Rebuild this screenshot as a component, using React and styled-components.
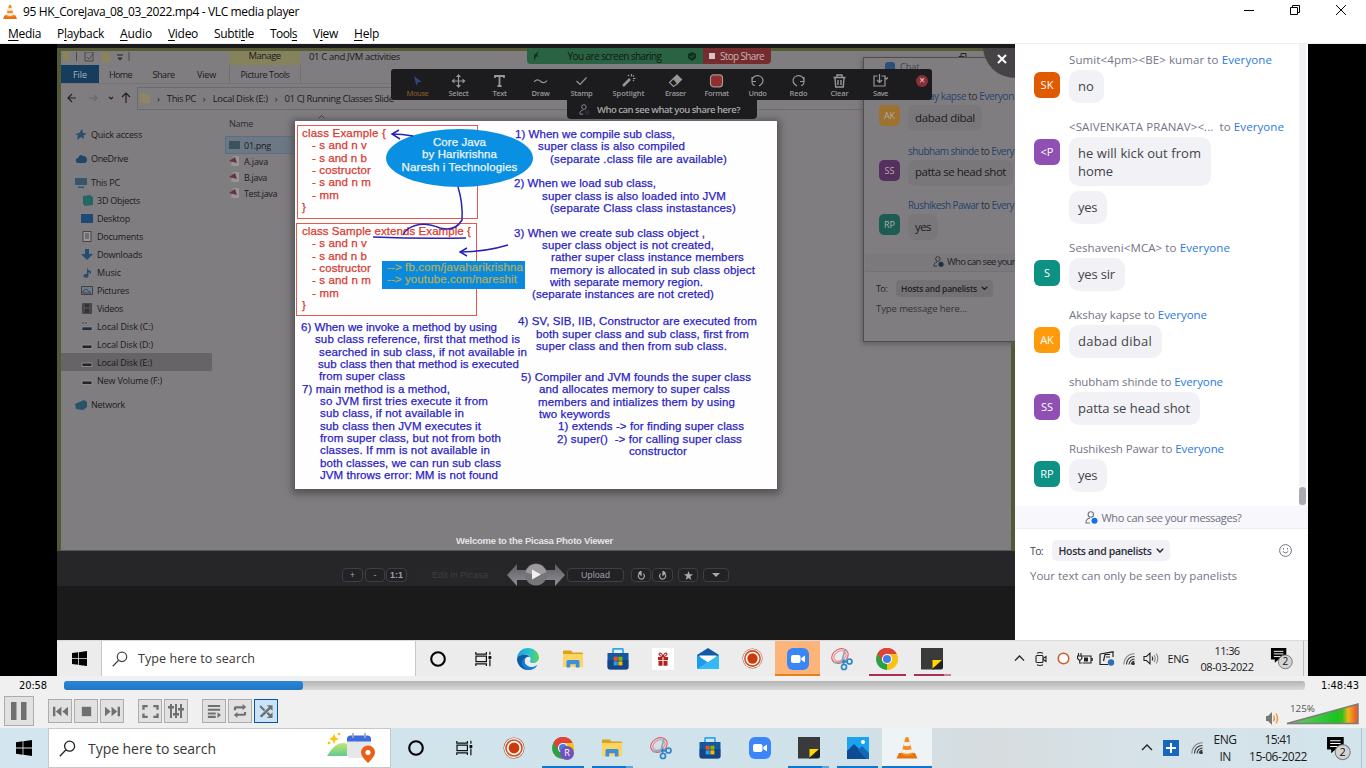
import React, { useLayoutEffect, useRef } from "react";
import styled, { createGlobalStyle } from "styled-components";

const Global = createGlobalStyle`
  * { box-sizing: border-box; }
  html, body { margin: 0; padding: 0; }
  body { width: 1366px; height: 768px; overflow: hidden; background: #f0f0f0; font-family: "Open Sans", "Noto Sans", sans-serif; }
  svg { display: block; flex: none; }
`;

/* ---------- text that is tracked to an exact width ---------- */
const FitSpan = styled.span`
  display: inline-block;
  white-space: pre;
  flex: none;
`;
function Fit({ w, children }) {
  const ref = useRef(null);
  useLayoutEffect(() => {
    const el = ref.current;
    el.style.letterSpacing = "0px";
    const natural = el.getBoundingClientRect().width;
    el.style.letterSpacing = `${(w - natural) / el.textContent.length}px`;
  }, [w, children]);
  return <FitSpan ref={ref}>{children}</FitSpan>;
}

/* ---------- icons ---------- */
const Windows = ({ s = 16 }) => (
  <svg width={s} height={s} viewBox="0 0 16 16" fill="#000">
    <path d="M0 2.2 6.6 1.3V7.6H0zM7.4 1.2 16 0V7.6H7.4zM0 8.4H6.6V14.7L0 13.8zM7.4 8.4H16V16L7.4 14.8z" />
  </svg>
);
const Search = ({ s = 17, c = "#222" }) => (
  <svg width={s} height={s} viewBox="0 0 17 17" fill="none" stroke={c} strokeWidth="1.3">
    <circle cx="10.6" cy="6.2" r="5" /><path d="M7 9.8 .8 16.2" />
  </svg>
);
const Ring = () => (
  <svg width="18" height="18" viewBox="0 0 18 18" fill="none" stroke="#000" strokeWidth="2.1"><circle cx="9" cy="9" r="6.8" /></svg>
);
const TaskView = () => (
  <svg width="17" height="16" viewBox="0 0 17 16" fill="none" stroke="#111" strokeWidth="1.2">
    <path d="M.8 1v2.2h10.6V1M.8 15v-2.2h10.6V15M1 5.2h10.4v5.4H1zM14.9 .8v3M14.9 8.5v6.7" />
    <path d="M13.5 5h2.8v3h-2.8z" fill="#111" stroke="none" />
  </svg>
);
const Edge = () => (
  <svg width="24" height="24" viewBox="0 0 24 24">
    <defs><linearGradient id="eg" x1="0" x2="1"><stop offset="0" stopColor="#1b9de2" /><stop offset=".6" stopColor="#2bc3c8" /><stop offset="1" stopColor="#62d34a" /></linearGradient></defs>
    <path d="M1 12C1 5.500 6 1 12 1s11 4.500 11 9.500c0 3.500-3 5.500-6 5.500-2.500 0-3.500-1-3.200-1.700.8-1 .9-2 .7-3C14 9 12 7.500 9 7.500 5 7.500 1.800 9.500 1 12z" fill="url(#eg)" />
    <path d="M1 12c.8-3 4-4.500 7.500-4.500 2.500 0 4.500 1 5.500 2.600-3-1-5.500 1-5.500 4 0 4 4 6.500 8 6 2-.3 3.600-1 4.800-2.200C19.500 21.200 16 23 12 23 6 23 1 18 1 12z" fill="#0c59a4" />
    <path d="M8.500 14c0 4 4 6.500 8 6 2-.3 3.600-1 4.800-2.200C19.500 21.200 16 23 12 23c-3.500-1-6-4-6-7.500 0-2.500 1.500-4.800 4-5.300-1 1-1.500 2.300-1.500 3.800z" fill="#1481d6" />
  </svg>
);
const Folder = () => (
  <svg width="20" height="18" viewBox="0 0 20 18">
    <path d="M0 1.500Q0 .5 1 .5h7l1.500 2H19q1 0 1 1V16q0 1-1 1H1q-1 0-1-1z" fill="#e0a118" />
    <path d="M0 4h20v12q0 1-1 1H1q-1 0-1-1z" fill="#fdd564" />
    <path d="M3.500 17.500V11.500q0-1.500 1.500-1.500h10q1.500 0 1.500 1.500v6h-3.700v-3.300H7.200v3.300z" fill="#3c8fd8" />
  </svg>
);
const Store = () => (
  <svg width="22" height="22" viewBox="0 0 22 22">
    <path d="M6 6V1.500Q6 .8 6.700 .8h8.600q.7 0 .7 .7V6" fill="none" stroke="#2fa9ea" strokeWidth="1.700" />
    <path d="M.5 5h21v14q0 2.500-2.500 2.500H3Q.5 21.500 .5 19z" fill="#14599e" /><path d="M.5 12h21v7q0 2.500-2.500 2.500H3Q.5 21.500 .5 19z" fill="#153f78" opacity=".7" />
    <path d="M6.700 8.700h4v4h-4z" fill="#f25022" /><path d="M11.400 8.700h4v4h-4z" fill="#7fba00" /><path d="M6.700 13.400h4v4h-4z" fill="#20a4ef" /><path d="M11.400 13.400h4v4h-4z" fill="#ffb900" />
  </svg>
);
const Gift = () => (
  <svg width="22" height="22" viewBox="0 0 22 22">
    <path d="M0 0h22v22H0z" fill="#fff" /><path d="M6 9h4.500v3H6zM11.500 9H16v3h-4.500zM6.500 12.700h4v5h-4zM11.500 12.700h4v5h-4z" fill="#b3201c" />
    <path d="M11 8.600C7 8.600 6.300 5 8 5s3 3.600 3 3.600zm0 0c4 0 4.700-3.600 3-3.600s-3 3.600-3 3.600z" fill="none" stroke="#b3201c" strokeWidth="1.100" />
  </svg>
);
const Mail = () => (
  <svg width="22" height="21" viewBox="0 0 22 21">
    <path d="M0 7 11 0l11 7v5H0z" fill="#0f5ba7" /><path d="M2.500 7.500h17V15h-17z" fill="#fff" />
    <path d="M0 7l11 7.500L22 7v13q0 1-1 1H1q-1 0-1-1z" fill="#1d9bea" /><path d="M0 21 22 7v13q0 1-1 1z" fill="#33baf7" />
  </svg>
);
const Recorder = ({ s = 22 }) => (
  <svg width={s} height={s} viewBox="0 0 22 22"><circle cx="11" cy="11" r="10.500" fill="#8b5b4a" /><circle cx="11" cy="11" r="9.900" fill="#fff" /><circle cx="11" cy="11" r="8" fill="none" stroke="#db4a17" strokeWidth="1.600" /><circle cx="11" cy="11" r="5.400" fill="#c93a0c" /></svg>
);
const Zoom = () => (
  <svg width="22" height="22" viewBox="0 0 22 22"><rect width="22" height="22" rx="6" fill="#3b86f7" /><rect x="4" y="7" width="9.500" height="8" rx="2" fill="#fff" /><path d="m14.300 10 3.700-2.500v7L14.300 12z" fill="#fff" /></svg>
);
const Snip = () => (
  <svg width="24" height="24" viewBox="0 0 24 24" fill="none">
    <g stroke="#e4575b" strokeWidth="1.100"><ellipse cx="10" cy="9" rx="8.700" ry="6.800" transform="rotate(-30 10 9)" /><ellipse cx="10" cy="9" rx="6.500" ry="4.700" transform="rotate(-30 10 9)" opacity=".6" /></g>
    <path d="M15 2.500 12 14M3.500 15.500 16 14.500" stroke="#8fa3b3" strokeWidth="1.600" />
    <g stroke="#2a86c8" strokeWidth="1.700"><circle cx="19.500" cy="14.500" r="2.500" /><circle cx="14" cy="20" r="2.500" /><path d="m13.500 17.500.5-5M17 14.700l-5 .2" /></g>
  </svg>
);
const Chrome = ({ badge }) => (
  <svg width="24" height="24" viewBox="0 0 24 24">
    <path d="M12 12 2.500 6.500A11 11 0 0 1 21.500 6.500H12z" fill="#dd4436" /><path d="M12 12 21.500 6.500A11 11 0 0 1 12 23z" fill="#fbc116" />
    <path d="M12 12v11A11 11 0 0 1 2.500 6.500z" fill="#2c9f47" /><path d="M12 7h9.700A11 11 0 0 1 12 23l4.500-8.500z" fill="#fbc116" /><path d="M2.500 6.500 7.600 14.700 12 12V7h9.700A11 11 0 0 0 2.500 6.500z" fill="#dd4436" />
    <circle cx="12" cy="12" r="5.100" fill="#fff" /><circle cx="12" cy="12" r="4" fill="#3f7fe6" />
    {badge && <><circle cx="16" cy="17" r="7" fill="#7151ba" /><text x="16" y="20.200" fontSize="9" textAnchor="middle" fill="#fff" fontFamily="Open Sans, sans-serif">R</text></>}
  </svg>
);
const Sticky = () => (
  <svg width="22" height="22" viewBox="0 0 22 22"><path d="M0 0h22v12l-9 9.500H0z" fill="#3a3a3a" /><path d="M11 21.500 22 11v8.500q0 2-2 2z" fill="#222" /><path d="M11.500 20.500v-8.500h9.500z" fill="#ffd800" /></svg>
);
const Photos = () => (
  <svg width="22" height="22" viewBox="0 0 22 22"><path d="M0 0h22v22H0z" fill="#1ba3ee" /><path d="M0 14 7 7l15 15H0z" fill="#0d4c94" /><path d="m11 13 4-4 7 7v6h-3z" fill="#1567b8" /><circle cx="16" cy="5" r="2" fill="#fff" /></svg>
);
const Cone = ({ s = 24 }) => (
  <svg width={s} height={s} viewBox="0 0 24 24">
    <path d="M4 17h16l2.500 5.500h-21z" fill="#e8700d" /><path d="M10.500 1.500q1.500-1 3 0L18 18.500q-6 3-12 0z" fill="#f58a1e" />
    <path d="m9.400 5.800-1 3.800q3.600 1.300 7.200 0l-1-3.800q-2.600.9-5.200 0zM7.500 13 6.500 16.600q5.500 2.500 11 0l-1-3.600q-4.500 1.900-9 0z" fill="#f4f0ec" />
  </svg>
);
const Chevron = ({ s = 12, c = "#222" }) => (
  <svg width={s} height={s * 0.6} viewBox="0 0 12 7" fill="none" stroke={c} strokeWidth="1.400"><path d="M1 6 6 1l5 5" /></svg>
);
const ChevronDown = ({ s = 8, c = "#333", sw = 2 }) => (
  <svg width={s} height={s * 0.6} viewBox="0 0 10 6" fill="none" stroke={c} strokeWidth={sw}><path d="m1 1 4 4 4-4" /></svg>
);
const Wifi = () => (
  <svg width="12" height="12" viewBox="0 0 14 14" fill="none" stroke="#333" strokeWidth="1.200"><path d="M1 13.500C1 6.500 6 1 13.500 1" opacity=".55" /><path d="M4 13.500C4 8 8 4 13.500 4M7 13.500C7 10 10 7 13.500 7" /><path d="M9.500 13.500c0-2 2-4 4-4" /><circle cx="12" cy="12.300" r="1.200" fill="#333" /></svg>
);
const Notice = ({ s = 24 }) => (
  <svg width={s} height={s} viewBox="0 0 24 24">
    <path d="M1 1h16v12H9l-4 3.500V13H1z" fill="#000" /><path d="M4 4.500h10M4 7.200h10M4 10h7" stroke="#fff" strokeWidth="1" />
    <circle cx="16" cy="15.500" r="7.200" fill="#d3d3d3" stroke="#777" strokeWidth="1" /><text x="16" y="19.300" fontSize="10.500" textAnchor="middle" fontFamily="Open Sans, sans-serif" fill="#111">2</text>
  </svg>
);
const Camera = () => (
  <svg width="12" height="16" viewBox="0 0 12 16" fill="none" stroke="#222" strokeWidth="1.100"><rect x="1" y="4.500" width="7" height="7" rx="1" /><path d="m8 7.500 3-2v5l-3-2M2 2.300q3-1.500 6 0M2 13.700q3 1.500 6 0" /></svg>
);
const Battery = () => (
  <svg width="16" height="12" viewBox="0 0 16 12" fill="none" stroke="#222" strokeWidth="1.100"><path d="M5.500 3h8.500v7H5.500M15.200 5v3M1.500 0v2.500M4 0v2.500M.5 3h4.300v2.500L3.500 7H2L.5 5.500zM2.700 7v3h2" /><path d="M7 4.500h4v4H7z" fill="#222" stroke="none" /></svg>
);
const Pad = () => (
  <svg width="16" height="15" viewBox="0 0 16 15" fill="none" stroke="#222" strokeWidth="1.200"><path d="M1 3 14 .8V6M1 3v10.500h8M11 3.500H6L4.500 10M7 6h4" /><circle cx="12" cy="11.500" r="3.200" fill="#2d70b8" stroke="none" /></svg>
);
const Speaker = () => (
  <svg width="16" height="13" viewBox="0 0 16 13" fill="none" stroke="#222" strokeWidth="1.100"><path d="M1 4.500h2.500L7 1.200v10.600L3.500 8.500H1zM9 4.500q1.500 2 0 4" /><path d="M11 3q2.500 3.500 0 7M13.200 1.500q3.300 5 0 10" opacity=".5" /></svg>
);
const PersonShield = ({ c = "#6e7680", d = "#0e72ed", s = 13 }) => (
  <svg width={s} height={s} viewBox="0 0 13 13" fill="none" stroke={c} strokeWidth="1.100"><circle cx="5.800" cy="3.500" r="2.700" /><path d="M5 12H1c-.3-3 1.500-4.700 4-4.700" /><circle cx="9.500" cy="9.700" r="3" fill={d} stroke="none" /></svg>
);
const SearchArt = () => (
  <svg width="50" height="32" viewBox="0 0 50 32">
    <defs><linearGradient id="hill" x1="0" y1="0" x2="0" y2="1"><stop offset="0" stopColor="#c2e86c" /><stop offset="1" stopColor="#63c993" /></linearGradient></defs>
    <path d="m7 1.500 1.500 3.800L12 7 8.500 8.300 7 12 5.500 8.300 2 7l3.500-1.700z" fill="#fcc30b" /><circle cx="12" cy="2" r="1.300" fill="#fcc30b" /><circle cx="2" cy="11" r="1.300" fill="#fcc30b" />
    <path d="M0 24Q12 3 26 16v8z" fill="url(#hill)" /><rect x="20" y="4" width="24" height="22" rx="3.500" fill="#e5e7e9" /><path d="M20 9.500V7q0-3.500 3.500-3.500h17Q44 3.500 44 7v2.500z" fill="#3f6cd8" /><path d="M26 1v5M38 1v5" stroke="#9aaac0" strokeWidth="1.700" />
    <path d="M34 20.500a7 7 0 0 1 14 0q0 4-7 10.500-7-6.500-7-10.500z" fill="#e9601b" /><circle cx="41" cy="20.500" r="2.500" fill="#fff" />
  </svg>
);

/* ---------- frame ---------- */
const Page = styled.div`display: flex; flex-direction: column; width: 1366px; height: 768px; overflow: hidden;`;
const TitleBar = styled.header`display: flex; align-items: center; height: 23px; padding-left: 2px; background: #fff; font-size: 12px; color: #000;
  > span { margin-left: 5px; }`;
const WindowButtons = styled.div`display: flex; margin-left: auto; padding-right: 2px; height: 20px; align-self: flex-start;
  > div { width: 46px; display: flex; align-items: center; justify-content: center; }`;
const MenuBar = styled.nav`display: flex; gap: 16px; height: 21px; padding: 1px 0 0 8px; align-items: center; background: #fff; border-bottom: 1px solid #eeeeee; font-size: 12px; color: #000;
  u { text-underline-offset: 2px; }`;
const Stage = styled.main`display: flex; height: 632px; background: #000; padding-left: 57px;`;
const Video = styled.div`width: 1251px; display: flex; flex-direction: column;`;
const VideoTop = styled.div`display: flex; height: 596px;`;
const Desktop = styled.section`position: relative; width: 958px; display: flex; flex-direction: column; background: #1a1a1a; border-top: 4px solid #1b1b1e; overflow: hidden;`;

/* ---------- explorer ---------- */
const Explorer = styled.div`height: 502px; display: flex; flex-direction: column; background: #807d80; border: 4px solid #505b35; border-top: 3px solid #565b35; border-bottom: 0; color: #1b1a1c; font-size: 9px;`;
const ExpTitle = styled.div`display: flex; height: 14px; align-items: center; font-size: 9.500px;
  > svg { margin: 0 42px 2px auto; }`;
const QuickIcons = styled.div`width: 168px; height: 14px; padding-left: 2px; display: flex; align-items: center;`;
const Manage = styled.div`width: 71px; height: 14px; background: #85835c; display: flex; justify-content: center; align-items: center; padding-bottom: 5px;`;
const ExpCaption = styled.div`padding: 0 0 3px 9px;`;
const Tabs = styled.div`display: flex; height: 18px; align-items: center;
  > div { height: 18px; display: flex; align-items: center; justify-content: center; width: 43px; }`;
const FileTab = styled.div`background: #163c5e; color: #a5b4c3; && { width: 38px; }`;
const PictureTab = styled.div`border: 1px solid #706e70; border-width: 0 1px; && { width: 72px; margin-left: 1px; }`;
const AddressRow = styled.div`display: flex; height: 29px; align-items: center; border-top: 1px solid #777477;`;
const Arrows = styled.div`width: 76px; display: flex; align-items: center; gap: 9px; padding-left: 6px;`;
const Address = styled.div`flex: 1; height: 23px; border: 1px solid #6d6a6d; display: flex; align-items: center; padding-left: 2px; gap: 7px; font-size: 9.500px;`;
const ExpBody = styled.div`display: flex; flex: 1;`;
const Nav = styled.div`width: 151px; padding-top: 14px;`;
const NavRow = styled.div`display: flex; align-items: center; height: 17.950px; gap: 4px; padding-left: ${(p) => (p.$root ? 14 : 20)}px; margin-bottom: ${(p) => p.$gap || 0}px; background: ${(p) => (p.$on ? "#666466" : "transparent")};
  svg { width: 12px; height: 11px; }`;
const Files = styled.div`width: 240px; padding: 2px 0 0 14px;`;
const FilesHead = styled.div`height: 23px; padding: 0 0 4px 3px; display: flex; align-items: center; gap: 65px; color: #2e2c2e;
  > svg { margin-top: -14px; }`;
const FileRow = styled.div`height: 16px; display: flex; align-items: center; gap: 4px; padding-left: 3px; ${(p) => p.$on && "background: #6c7884; outline: 1px solid #5b6f82;"}`;

const navIcon = {
  star: <path d="m7 0 1 4 4 .5-3.500 2L9 10 6 8l-4 3 1-4.500L0 5l4-.8z" fill="#254e6f" />,
  cloud: <path d="M2 10q-3-4 1-5 2-5 5-2 4 0 4 4 0 3-3 3z" fill="#1f4668" />,
  pc: <path d="M0 1h12v7H0zM3 9.500h6V11H3z" fill="#37566d" />,
  cube: <path d="m2 1 7-1 3 2v8l-8 1-2-2z" fill="#256765" />,
  desk: <path d="M0 1h12v9H0z" fill="#1e4a76" />,
  doc: <path d="M2 .5h8v10H2zM4 3h4M4 5h4M4 7h4" fill="#9a989a" stroke="#333" strokeWidth=".8" />,
  down: <path d="M4 0h4v5h4l-6 6-6-6h4z" fill="#264d70" />,
  music: <path d="M6 0q0 3 4 4v3L7.500 5v4a2.500 2 0 1 1-1.500-2z" fill="#264d70" />,
  pic: <path d="M.5 1.500h11v8H.5zM2 6l3-2 5 4H2z" fill="#6b7d8b" stroke="#333" strokeWidth=".8" />,
  film: <path d="M1 0h10v11H1zM3 1v9M9 1v9M3 5h6" fill="#353338" stroke="#777" strokeWidth=".6" />,
  disk: <path d="M1 6h10v3.500H1z" fill="#252427" stroke="#9a999a" strokeWidth=".8" />,
  diskC: <path d="M1 1h2v2H1zM4 1h2v2H4zM1 6h10v3.500H1z" fill="#252f3a" stroke="#8d98a0" strokeWidth=".6" />,
  net: <path d="M0 5 9 1l3 2v5l-4 3-7-1z" fill="#285368" />,
};
const NAV = [
  ["star", "Quick access", 51, 6, 1], ["cloud", "OneDrive", 37, 6, 1], ["pc", "This PC", 29, 0, 1], ["cube", "3D Objects", 43], ["desk", "Desktop", 33], ["doc", "Documents", 46], ["down", "Downloads", 45], ["music", "Music", 24], ["pic", "Pictures", 32], ["film", "Videos", 26], ["diskC", "Local Disk (C:)", 56], ["disk", "Local Disk (D:)", 56], ["disk", "Local Disk (E:)", 55, 0, 0, 1], ["disk", "New Volume (F:)", 65, 6], ["net", "Network", 34, 0, 1],
];

/* ---------- chat window behind the viewer ---------- */
const GhostChat = styled.div`position: absolute; left: 806px; top: 9px; width: 160px; height: 285px; background: #807d80; border: 1px solid #4f4d50; color: #222; padding: 2px 0 0 15px; font-size: 10px; box-shadow: -1px 2px 5px #5f5c60;`;
const GhostHead = styled.div`display: flex; gap: 5px; height: 29px; align-items: flex-start; font-size: 9px; padding-left: 6px; color: #444;
  > i { width: 10px; height: 10px; border-radius: 3px; background: #2c4f76; margin-top: 2px; }`;
const GhostMsg = styled.div`height: 54.500px; white-space: nowrap;`;
const GhostName = styled.div`padding-left: 29px; height: 16px; line-height: 14px; color: #24436c; em { font-style: normal; color: #2d2c2f; }`;
const GhostLine = styled.div`display: flex; gap: 8px;`;
const GhostAvatar = styled.div`width: 21px; height: 21px; border-radius: 5px; background: ${(p) => p.$c}; color: #b4abab; display: flex; align-items: center; justify-content: center; font-size: 9px;`;
const GhostBubble = styled.div`background: #7a777a; border-radius: 7px; height: 26px; padding: 0 7px 2px; display: flex; align-items: center; font-size: 11.500px; color: #1c1b1d;`;
const GhostWho = styled.div`margin: 0 0 0 -14px; height: 19px; background: #7b797b; border-bottom: 1px solid #747174; display: flex; align-items: center; gap: 3px; padding-left: 68px; white-space: nowrap; font-size: 9.500px;`;
const GhostTo = styled.div`display: flex; align-items: center; gap: 9px; margin: 8px 0 0 -3px; height: 17px; font-size: 9px;`;
const GhostPill = styled.div`background: #757275; height: 17px; padding: 0 5px; border-radius: 4px; display: flex; align-items: center; gap: 4px; font-weight: 600; font-size: 8.500px;`;
const GhostInput = styled.div`margin: 5px 0 0 -3px; color: #333; font-size: 9.500px;`;

/* ---------- slide ---------- */
const Slide = styled.article`position: absolute; left: 238px; top: 73px; width: 482px; height: 368px; background: #fefefe; box-shadow: 0 2px 7px 3px #555356; display: flex; font-family: "Liberation Sans", Arial, sans-serif; font-size: 11.500px; -webkit-text-stroke: .25px currentColor;`;
const SlideLeft = styled.div`width: 215px; padding: 4px 0 0 1px; flex: none;`;
const SlideRight = styled.div`padding-top: 7px; flex: 1;`;
const ClassBox = styled.div`width: 181px; height: ${(p) => p.$h}px; margin-left: ${(p) => p.$x}px; border: 1.500px solid #e8564c; color: #d93931; padding: 1px 0 0 ${(p) => 5 - p.$x}px; margin-bottom: ${(p) => p.$mb}px;`;
const Line = styled.div`height: 12.350px; line-height: 12.350px; white-space: pre; padding-left: ${(p) => p.$x || 0}px; margin-bottom: ${(p) => p.$gap || 0}px;`;
const Blue = styled.div`color: #2a22c4;`;
const Ellipse = styled.div`position: absolute; left: 91px; top: 8px; width: 147px; height: 58px; border-radius: 50%; background: #0a90e2; color: #eef6fc; display: flex; flex-direction: column; align-items: center; padding-top: 7px;`;
const Links = styled.div`position: absolute; left: 87px; top: 140px; width: 143px; height: 28px; background: #0a8ade; color: #b4ae58; padding: 0 0 0 5px;`;
const Ink = styled.svg`position: absolute; inset: 0;`;

const BOX = [["- s and n v", 55], ["- s and n b", 55], ["- costructor", 59], ["- s and n m", 59], ["- mm", 27]];
const LEFT = [
  [5, 196, "6) When we invoke a method by using"], [19, 205, "sub class reference, first that method is"], [23, 208, "searched in sub class, if not available in"], [22, 201, "sub class then that method is executed"], [23, 86, "from super class"],
  [6, 148, "7) main method is a method,"], [24, 168, "so JVM first tries execute it from"], [24, 144, "sub class, if not available in"], [24, 161, "sub class then JVM executes it"], [24, 181, "from super class, but not from both"], [24, 170, "classes. If mm is not available in"], [24, 181, "both classes, we can run sub class"], [24, 178, "JVM throws error: MM is not found"],
];
const RIGHT = [
  [5, 160, "1) When we compile sub class,"], [28, 147, "super class is also compiled"], [40, 177, "(separate .class file are available)", 12.35],
  [4, 142, "2) When we load sub class,"], [32, 184, "super class is also loaded into JVM"], [40, 186, "(separate Class class instastances)", 12.35],
  [4, 191, "3) When we create sub class object ,"], [32, 172, "super class object is not created,"], [41, 193, "rather super class instance members"], [40, 205, "memory is allocated in sub class object"], [40, 153, "with separate memory region."], [22, 182, "(separate instances are not creted)", 14.6],
  [8, 239, "4) SV, SIB, IIB, Constructor are executed from"], [26, 213, "both super class and sub class, first from"], [26, 191, "super class and then from sub class.", 18.5],
  [11, 230, "5) Compiler and JVM founds the super class"], [29, 191, "and allocates memory to super calss"], [28, 197, "members and intializes them by using"], [29, 71, "two keywords"], [48, 186, "1) extends -> for finding super class"], [47, 185, "2) super()  -> for calling super class"], [119, 58, "constructor"],
];

/* ---------- share overlay ---------- */
const Sharing = styled.div`position: absolute; left: 470px; top: 0; width: 244px; height: 16px; display: flex; font-size: 10px; border-radius: 0 0 4px 4px; overflow: hidden;`;
const ShareGreen = styled.div`width: 176px; background: #2a6244; color: #0d1a12; display: flex; align-items: center; justify-content: space-between; padding: 0 7px 0 5px;`;
const ShareRed = styled.div`width: 68px; background: #762c2e; color: #c3b4b4; display: flex; align-items: center; gap: 5px; padding: 0 0 1px 6px;
  > i { width: 6px; height: 6px; background: #d5c6c6; }`;
const Tools = styled.div`position: absolute; left: 334px; top: 21px; width: 541px; height: 31px; padding-left: 6px; background: #1c1b1d; border-radius: 3px; display: flex; color: #98969a; font-size: 7.500px; font-weight: 600;`;
const Tool = styled.div`width: ${(p) => p.$w || 41}px; display: flex; flex-direction: column; align-items: center; padding-top: 5px; color: ${(p) => p.$c || "inherit"};
  > span { line-height: 9px; margin-top: 1px; }`;
const CloseDot = styled.div`width: 12px; height: 12px; margin: 6px 0 0 15px; border-radius: 50%; background: #8c3035; color: #d3c4c5; font-size: 10px; line-height: 11px; text-align: center;`;
const WhoShare = styled.div`position: absolute; left: 510px; top: 52px; width: 190px; height: 19px; background: #1c1b1d; border-radius: 0 0 4px 4px; display: flex; align-items: center; gap: 7px; padding: 0 0 1px 12px; color: #a9a7aa; font-size: 9.500px; font-weight: 600;`;
const Corner = styled.div`position: absolute; right: 0; top: -4px; width: 32px; height: 34px; background: #454346; border-bottom-left-radius: 32px; padding: 10px 0 0 14px;`;

const I = ({ children }) => <svg width="15" height="14" viewBox="0 0 15 14" fill="none" stroke="#98969a" strokeWidth="1.200">{children}</svg>;
const TOOLS = [
  ["Mouse", 22, <path d="m4 2 8 6-4 .3L6.500 12z" fill="#2a4878" stroke="none" />, 41, "#7f5428"],
  ["Select", 20, <><path d="M7.500 3v8M3.500 7h8" /><path d="m7.500 0 2.500 3H5zM7.500 14 5 11h5zM.5 7l3-2.500v5zM14.500 7l-3 2.500v-5z" fill="#98969a" stroke="none" /></>],
  ["Text", 14, <path d="M3 4V2h9v2M7.500 2v10M5.500 12h4" strokeWidth="1.800" />],
  ["Draw", 18, <path d="M1 8q3-4 6.500-.8T14 6.500" />],
  ["Stamp", 22, <path d="m2.500 7 3.500 3.500 6.500-7" />],
  ["Spotlight", 32, <><path d="m2 12 7-7" strokeWidth="2.500" /><path d="M10.500 0v2.500M12 4.500h2.500M7 1l1 1M13 7l-1-1M13 1.500l-1 1" /></>, 53],
  ["Eraser", 21, <><path d="m5.500 4.500 3.500-3.500 4.500 4.500-4 4z" fill="#98969a" /><path d="m5.500 4.500-4 4L5.500 12.500l4-3" /></>],
  ["Format", 24, <rect x="1.500" y=".8" width="12" height="12" rx="3" fill="#902f2e" stroke="#a39292" />],
  ["Undo", 18, <path d="M5 11.500q-3 0-3-4.500a5.500 5 0 1 1 9 3.500L9 12M2 3v4.500h4" />],
  ["Redo", 18, <path d="M10 11.500q3 0 3-4.500a5.500 5 0 1 0-9 3.500L6 12M13 3v4.500H9" />],
  ["Clear", 18, <path d="M1.500 3.500h12M5 3V1h5v2M3 4l.7 9h7.600l.7-9M6 6v5M9 6v5" strokeWidth="1.400" />],
  ["Save", 15, <path d="M4.500 2H1v10h11V2H8.500M6.500 0v8M4 6l2.500 2.500L9 6M12.500 3.500 13.500 5l1.300-1.500" />],
];

/* ---------- photo viewer ---------- */
const Welcome = styled.div`position: absolute; left: 399px; top: 487px; font: bold 9.500px "Liberation Sans", sans-serif; color: #e4e2e4;`;
const Viewer = styled.div`height: 36px; background: #262528; border-top: 1px solid #555; display: flex; padding: 14px 0 0 285px; color: #a09fa1; font: 9px "Liberation Sans", sans-serif;`;
const PlayArrows = styled.svg`margin: -2px 0 0 2px;`;
const VBtn = styled.div`width: ${(p) => p.$w}px; height: 14px; margin-left: ${(p) => p.$ml ?? 1}px; border: 1px solid #403e42; border-radius: 4px; background: #222124; display: flex; align-items: center; justify-content: center; margin-top: 3px; ${(p) => p.$off && "border-color: #28272a; background: #272628; color: #403f41;"}`;

/* ---------- live chat ---------- */
const Chat = styled.aside`width: 293px; background: #fff; display: flex; flex-direction: column;`;
const Messages = styled.div`height: 462px; display: flex; padding: 0 2px 0 19px;`;
const MsgList = styled.div`flex: 1; padding-top: 8px;`;
const Scroll = styled.div`width: 7px; background: #f1f1f6; padding-top: 443px; > i { display: block; height: 18px; border-radius: 4px; background: #aaaab1; }`;
const Sender = styled.div`height: 16px; line-height: 16px; padding-left: 35px; color: #747487; font-size: 11.500px; white-space: nowrap; em { font-style: normal; color: #2a79e0; }`;
const MsgBody = styled.div`display: flex; align-items: flex-start; margin: 2px 0 16px;`;
const Avatar = styled.div`width: 26px; height: 26px; margin: 2px 9px 0 0; border-radius: 6px; background: ${(p) => p.$c}; color: #fff; display: flex; align-items: center; justify-content: center; font-size: 11px; padding-bottom: 2px;`;
const Bubbles = styled.div`display: flex; flex-direction: column; gap: 5px; align-items: flex-start;`;
const Bubble = styled.div`background: #f1f1f6; border-radius: 10px; padding: 7px 9px 0; height: ${(p) => (p.$tall ? 49 : 33)}px; color: #444449; font-size: 13px; line-height: 18px; width: ${(p) => p.$w}px; white-space: pre;`;
const WhoSee = styled.div`height: 23px; background: #f7f7fc; border-bottom: 1px solid #eeeef4; display: flex; align-items: center; justify-content: center; gap: 4px; color: #6e7080; font-size: 11px; padding-left: 3px;`;
const ToRow = styled.div`display: flex; align-items: center; height: 21px; margin-top: 11px; padding: 0 16px 0 15px; gap: 9px; font-size: 10.500px; color: #44444c;
  > svg { margin-left: auto; }`;
const Pill = styled.div`height: 21px; width: 118px; background: #f1f1f6; border-radius: 5px; display: flex; align-items: center; justify-content: center; gap: 4px; font-weight: 600; color: #2c2c36;`;
const Hint = styled.div`padding: 6px 0 0 15px; color: #747487; font-size: 11.500px; line-height: 18px;`;

const CHAT = [
  ["SK", "#e05a00", "Sumit<4pm><BE> kumar to ", 203, [["no", 35, 16]]],
  ["<P", "#8f50b4", "<SAIVENKATA PRANAV><...  to ", 215, [["he will kick out from\nhome", 142, 123], ["yes", 38, 19]]],
  ["S", "#0c9182", "Seshaveni<MCA> to ", 161, [["yes sir", 56, 37]]],
  ["AK", "#ff9b0a", "Akshay kapse to ", 138, [["dabad dibal", 93, 74]]],
  ["SS", "#8f50b4", "shubham shinde to ", 154, [["patta se head shot", 131, 112]]],
  ["RP", "#0c9182", "Rushikesh Pawar to ", 155, [["yes", 38, 19]]],
];

/* ---------- taskbars ---------- */
const Bar = styled.footer`display: flex; height: ${(p) => p.$h}px; background: ${(p) => p.$bg}; border-top: ${(p) => (p.$line ? "1px solid #d9d9d9" : "0")};`;
const Start = styled.div`width: ${(p) => p.$w}px; display: flex; align-items: center; justify-content: center;`;
const SearchBox = styled.div`width: ${(p) => p.$w}px; background: #fff; border: 1px solid #c5c8ca; border-width: ${(p) => (p.$inner ? "0 1px" : "1px")}; display: flex; align-items: center; gap: ${(p) => (p.$inner ? 10 : 12)}px; padding: 0 13px 0 10px; color: #383838; font-size: ${(p) => (p.$inner ? 12.5 : 14)}px;
  > svg:last-child { margin-left: auto; }`;
const AppCell = styled.div`width: ${(p) => p.$w}px; display: flex; align-items: center; justify-content: center; position: relative; background: ${(p) => p.$bg || "transparent"};
  &::after { content: ""; position: absolute; bottom: 0; height: 2px; left: ${(p) => (p.$bg ? 0 : 4)}px; right: ${(p) => (p.$bg ? 0 : 4)}px; background: ${(p) => p.$u || "transparent"}; }`;
const Tray = styled.div`display: flex; margin-left: auto; padding-right: ${(p) => p.$pr}px; color: #1b1b1b; font-size: ${(p) => p.$fs}px;`;
const TrayCell = styled.div`width: ${(p) => p.$w}px; display: flex; flex-direction: column; align-items: center; justify-content: center; line-height: ${(p) => p.$lh || 16}px;`;
const Divider = styled.div`width: 1px; background: #b9bfc2;`;

/* ---------- player controls ---------- */
const SeekRow = styled.div`height: 18px; display: flex; align-items: center; background: #f0f0f0; padding-left: 19px; font: 11px "DejaVu Sans Condensed", "DejaVu Sans", sans-serif; color: #000;`;
const Track = styled.div`width: 1241px; height: 9px; margin: 0 16px 0 17px; border-radius: 3px; background: linear-gradient(#b4b4b4, #d9d9d9); > i { display: block; width: 239px; height: 9px; border-radius: 3px; background: linear-gradient(#2b88d8, #2276c3); }`;
const Controls = styled.div`height: 34px; display: flex; align-items: center; background: #f0f0f0; padding: 0 7px 0 4px;`;
const Ctl = styled.button`width: ${(p) => (p.$big ? 30 : 24)}px; height: ${(p) => (p.$big ? 30 : 24)}px; margin: 0 ${(p) => p.$mr ?? 2}px 0 0; padding: 0; display: flex; align-items: center; justify-content: center; border: 1px solid ${(p) => (p.$on ? "#0a559f" : "#acacac")}; background: ${(p) => (p.$on ? "#cbe3f8" : "#e1e1e1")};`;
const Volume = styled.div`margin-left: auto; display: flex; height: 34px; align-items: flex-end; padding-bottom: 1px;`;
const C = ({ children, s = 14 }) => <svg width={s} height={s} viewBox="0 0 16 16" fill="#707070">{children}</svg>;

function ExplorerWindow() {
  return (
    <Explorer>
      <ExpTitle>
        <QuickIcons>
          <svg width="70" height="12" viewBox="0 0 70 12" fill="none" stroke="#4a484b">
            <path d="M0 0h6v9H0z" fill="#8d825a" stroke="none" /><path d="M13.500 0v9M66 0v9" /><path d="M22 0h8v9h-8zM24 5l2 2 4-5" /><path d="M39 1h8v9h-8z" fill="#8d825a" stroke="none" /><path d="M54 3h6M55 6h4l-2 2z" stroke="#222" />
          </svg>
        </QuickIcons>
        <Manage><Fit w={32}>Manage</Fit></Manage>
        <ExpCaption><Fit w={91}>01 C and JVM activities</Fit></ExpCaption>
        <svg width="46" height="9" viewBox="0 0 46 9" fill="none" stroke="#222"><path d="M0 5.500h8M36 3.500h5V9h-5zM38 3V.5h5V7h-2" /></svg>
      </ExpTitle>
      <Tabs>
        <FileTab><Fit w={14}>File</Fit></FileTab><div><Fit w={23}>Home</Fit></div><div><Fit w={22}>Share</Fit></div><div><Fit w={19}>View</Fit></div>
        <PictureTab><Fit w={49}>Picture Tools</Fit></PictureTab>
      </Tabs>
      <AddressRow>
        <Arrows>
          <svg width="66" height="12" viewBox="0 0 66 12" fill="none" stroke="#222" strokeWidth="1.200"><path d="M9 6H1m4-4L1 6l4 4" /><path d="M22 6h8m-3-3 3 3-3 3" stroke="#686568" /><path d="m42 5 2 2 2-2" /><path d="M59 11V1m-4 4 4-4 4 4" /></svg>
        </Arrows>
        <Address><svg width="10" height="12" viewBox="0 0 10 12"><path d="M0 1h4l1 1h5v9H0z" fill="#918561" /></svg>›<Fit w={29}>This PC</Fit>›<Fit w={55}>Local Disk (E:)</Fit>›<Fit w={109}>01 CJ Running Classes Slide</Fit></Address>
      </AddressRow>
      <ExpBody>
        <Nav>
          {NAV.map(([ic, t, w, gap, root, on]) => (
            <NavRow key={t} $gap={gap} $root={root} $on={on}><svg viewBox="0 0 12 11">{navIcon[ic]}</svg><Fit w={w}>{t}</Fit></NavRow>
          ))}
        </Nav>
        <Files>
          <FilesHead><Fit w={24}>Name</Fit><svg width="7" height="4" viewBox="0 0 7 4" fill="none" stroke="#3c3a3c"><path d="m.5 3.500 3-3 3 3" /></svg></FilesHead>
          {[["01.png", 27], ["A.java", 24], ["B.java", 23], ["Test.java", 33]].map(([t, w], i) => (
            <FileRow key={t} $on={i === 0}>
              <svg width="11" height="10" viewBox="0 0 11 10">{i === 0 ? <path d="M0 1h11v8H0z" fill="#3b5261" /> : <><path d="M4 0h6v10H2z" fill="#9a9598" /><path d="m0 5 6-4 2 6z" fill="#65343a" /></>}</svg>
              <Fit w={w}>{t}</Fit>
            </FileRow>
          ))}
        </Files>
      </ExpBody>
    </Explorer>
  );
}

const BACK_ROWS = [
  ["AK", "#9d7130", "Akshay kapse", "Everyon", 106, "dabad dibal", 60],
  ["SS", "#55305e", "shubham shinde", "Every", 106, "patta se head shot", 91],
  ["RP", "#1d5c53", "Rushikesh Pawar", "Every", 106, "yes", 16],
];

function BackChat() {
  return (
    <GhostChat>
      <GhostHead><i />Chat</GhostHead>
      {BACK_ROWS.map(([a, c, n, to, nw, m, w]) => (
        <GhostMsg key={a}>
          <GhostName><Fit w={nw}>{n} <em>to</em> {to}</Fit></GhostName>
          <GhostLine><GhostAvatar $c={c}>{a}</GhostAvatar><GhostBubble><Fit w={w}>{m}</Fit></GhostBubble></GhostLine>
        </GhostMsg>
      ))}
      <GhostWho><PersonShield c="#333" d="#1d2f49" s={11} /><Fit w={68}>Who can see your</Fit></GhostWho>
      <GhostTo><Fit w={11}>To:</Fit><GhostPill><Fit w={76}>Hosts and panelists</Fit><ChevronDown s={7} c="#222" /></GhostPill></GhostTo>
      <GhostInput><Fit w={91}>Type message here...</Fit></GhostInput>
    </GhostChat>
  );
}

function LectureSlide() {
  return (
    <Slide>
      <SlideLeft>
        {[["class Example {", 84, 94, 1, 4], ["class Sample extends Example {", 169, 93, 0, 5]].map(([t, w, h, x, mb]) => (
          <ClassBox key={t} $h={h} $x={x} $mb={mb}>
            <Line><Fit w={w}>{t}</Fit></Line>
            {BOX.map(([l, lw]) => <Line key={l} $x={10}><Fit w={lw}>{l}</Fit></Line>)}
            <Line>{"}"}</Line>
          </ClassBox>
        ))}
        <Blue>{LEFT.map(([x, w, t]) => <Line key={t} $x={x}><Fit w={w}>{t}</Fit></Line>)}</Blue>
      </SlideLeft>
      <SlideRight><Blue>{RIGHT.map(([x, w, t, g]) => <Line key={t} $x={x} $gap={g}><Fit w={w}>{t}</Fit></Line>)}</Blue></SlideRight>
      <Ellipse><Line><Fit w={53}>Core Java</Fit></Line><Line><Fit w={75}>by Harikrishna</Fit></Line><Line><Fit w={116}>Naresh i Technologies</Fit></Line></Ellipse>
      <Links><Line><Fit w={136}>{"--> fb.com/javaharikrishna"}</Fit></Line><Line><Fit w={130}>{"--> youtube.com/nareshit"}</Fit></Line></Links>
      <Ink width="482" height="368" fill="none" stroke="#2a22b4" strokeWidth="1.500">
        <path d="M118 15Q107 13 97 13M104 9l-7 4 8 5" /><path d="M163 66Q168 82 167 99 160 111 145 107 126 99 113 108 110 110 108 114" /><path d="M78 116Q125 118 171 117" /><path d="M213 124Q190 131 165 131M172 127l-7 4 7 4" />
      </Ink>
    </Slide>
  );
}

function ShareOverlay() {
  return (
    <>
      <Sharing>
        <ShareGreen><svg width="9" height="10" viewBox="0 0 9 10"><path d="M7 0 2 4v6l2-4 3-1-2-1z" fill="#11301e" /></svg><Fit w={94}>You are screen sharing</Fit><svg width="8" height="9" viewBox="0 0 8 9"><path d="m4 0 4 2v4L4 9 0 6V2z" fill="#11301e" /><path d="m2 4 1.500 2L6 3" stroke="#2a6244" fill="none" /></svg></ShareGreen>
        <ShareRed><i /><Fit w={44}>Stop Share</Fit></ShareRed>
      </Sharing>
      <Tools>
        {TOOLS.map(([t, w, ic, cw, c]) => <Tool key={t} $w={cw} $c={c}><I>{ic}</I><span><Fit w={w}>{t}</Fit></span></Tool>)}
        <CloseDot>×</CloseDot>
      </Tools>
      <WhoShare><PersonShield c="#8c8b8d" d="#232d42" s={11} /><Fit w={143}>Who can see what you share here?</Fit></WhoShare>
      <Corner><svg width="10" height="10" viewBox="0 0 10 10" stroke="#fff" strokeWidth="2"><path d="m1 1 8 8M9 1 1 9" /></svg></Corner>
    </>
  );
}

function ViewerBar() {
  const rot = <path d="M4.500 2.200A3.400 3.400 0 1 0 7 2.900M4.500 0v4.500L2 2.200z" fill="none" stroke="#aaa" strokeWidth="1.300" />;
  return (
    <Viewer>
      <VBtn $w={21} $ml={0}>+</VBtn><VBtn $w={20} $ml={2}>-</VBtn><VBtn $w={21}><b>1:1</b></VBtn>
      <VBtn $w={88} $ml={9} $off><Fit w={56}>Edit in Picasa</Fit></VBtn>
      <PlayArrows width="60" height="23" viewBox="0 0 60 23">
        <defs><linearGradient id="arr" x1="0" x2="0" y1="0" y2="1"><stop offset="0" stopColor="#605e62" /><stop offset="1" stopColor="#918f93" /></linearGradient></defs>
        <path d="m1 12 10-11v6h14v10H11v6zM59 12 49 1v6H35v10h14v6z" fill="url(#arr)" /><circle cx="30" cy="11.500" r="11" fill="#777578" /><path d="M19.500 9a11 11 0 0 1 21 0q-10 6-21 0z" fill="#9d9b9e" /><path d="m26 6.500 9 5-9 5z" fill="#f1f1f1" />
      </PlayArrows>
      <VBtn $w={57}><Fit w={29}>Upload</Fit></VBtn>
      <VBtn $w={20} $ml={7}><svg width="9" height="9" viewBox="0 0 10 10">{rot}</svg></VBtn>
      <VBtn $w={21}><svg width="9" height="9" viewBox="0 0 10 10"><g transform="matrix(-1 0 0 1 10 0)">{rot}</g></svg></VBtn>
      <VBtn $w={20} $ml={5}><svg width="9" height="9" viewBox="0 0 10 10"><path d="m5 0 1.300 3.500H10L7 6l1.200 4L5 7.700 1.800 10 3 6 0 3.500h3.700z" fill="#aaa" /></svg></VBtn>
      <VBtn $w={26} $ml={5}><svg width="8" height="4" viewBox="0 0 8 4"><path d="M0 0h8L4 4z" fill="#aaa" /></svg></VBtn>
    </Viewer>
  );
}

function ChatPanel() {
  return (
    <Chat>
      <Messages>
        <MsgList>
          {CHAT.map(([a, c, n, w, bs]) => (
            <React.Fragment key={n}>
              <Sender><Fit w={w}>{n}<em>Everyone</em></Fit></Sender>
              <MsgBody>
                <Avatar $c={c}>{a}</Avatar>
                <Bubbles>{bs.map(([t, bw, tw]) => <Bubble key={t} $w={bw} $tall={t.includes("\n")}>{t.split("\n").map((l, i) => <div key={l}><Fit w={i ? 35 : tw}>{l}</Fit></div>)}</Bubble>)}</Bubbles>
              </MsgBody>
            </React.Fragment>
          ))}
        </MsgList>
        <Scroll><i /></Scroll>
      </Messages>
      <WhoSee><PersonShield /><Fit w={140}>Who can see your messages?</Fit></WhoSee>
      <ToRow>
        <Fit w={13}>To:</Fit><Pill><Fit w={93}>Hosts and panelists</Fit><ChevronDown /></Pill>
        <svg width="13" height="13" viewBox="0 0 13 13" fill="none" stroke="#747487"><circle cx="6.500" cy="6.500" r="5.900" /><path d="M3.800 7.500q2.700 3 5.400 0M4.500 4v1.500M8.500 4v1.500" /></svg>
      </ToRow>
      <Hint><Fit w={207}>Your text can only be seen by panelists</Fit></Hint>
    </Chat>
  );
}

function InnerTaskbar() {
  const apps = [[<Ring />], [<TaskView />], [<Edge />], [<Folder />], [<Store />], [<Gift />], [<Mail />], [<Recorder s={21} />], [<Zoom />, "#fdb479", "#e77f1d"], [<Snip />], [<Chrome />, null, "#a8305f"], [<Sticky />, null, "linear-gradient(90deg,#a8305f 80%,#cf7fa4 80%)"]];
  return (
    <Bar $h={36} $bg="#ececed" $line>
      <Start $w={44}><Windows s={15} /></Start>
      <SearchBox $w={315} $inner><Search s={16} c="#444" /><Fit w={117}>Type here to search</Fit></SearchBox>
      {apps.map(([ic, bg, u], i) => <AppCell key={i} $w={44.9} $bg={bg} $u={u}>{ic}</AppCell>)}
      <Tray $pr={0} $fs={11}>
        <TrayCell $w={22}><Chevron s={11} /></TrayCell><TrayCell $w={22}><Camera /></TrayCell>
        <TrayCell $w={22}><svg width="13" height="13" viewBox="0 0 13 13"><circle cx="6.500" cy="6.500" r="5.300" fill="#fff" stroke="#cf5a2b" strokeWidth="1.500" /></svg></TrayCell>
        <TrayCell $w={22}><Battery /></TrayCell><TrayCell $w={22}><Pad /></TrayCell><TrayCell $w={22}><Wifi /></TrayCell><TrayCell $w={21}><Speaker /></TrayCell>
        <TrayCell $w={34}><Fit w={21}>ENG</Fit></TrayCell>
        <TrayCell $w={64}><Fit w={25}>11:36</Fit><Fit w={53}>08-03-2022</Fit></TrayCell>
        <TrayCell $w={44}><Notice s={23} /></TrayCell>
        <Divider /><TrayCell $w={4} />
      </Tray>
    </Bar>
  );
}

function OuterTaskbar() {
  const u = "#0f77d2", u2 = "linear-gradient(90deg,#0f77d2 82%,#5ca4e2 82%)";
  const apps = [[<Ring />], [<TaskView />], [<Recorder />], [<Chrome badge />, null, u], [<Folder />, null, u2], [<Snip />], [<Store />], [<Zoom />], [<Sticky />, null, u2], [<Photos />, null, u], [<Cone />, "#eef4f6", u]];
  return (
    <Bar $h={40} $bg="linear-gradient(90deg,#d3e5ee 0,#cfe2ea 60%,#d7dcdf 73%,#d6e2e8 82%,#d3e4ec 100%)">
      <Start $w={48}><Windows s={16} /></Start>
      <SearchBox $w={343}><Search s={17} /><Fit w={128}>Type here to search</Fit><SearchArt /></SearchBox>
      {apps.map(([ic, bg, un], i) => <AppCell key={i} $w={49.15} $bg={bg} $u={un}>{ic}</AppCell>)}
      <Tray $pr={4} $fs={12}>
        <TrayCell $w={24}><Chevron s={12} /></TrayCell>
        <TrayCell $w={24}><svg width="16" height="16" viewBox="0 0 16 16"><path d="M0 0h16v16H0z" fill="#1667bd" /><path d="M8 3v10M3 8h10" stroke="#fff" strokeWidth="2" /></svg></TrayCell>
        <TrayCell $w={27}><Wifi /></TrayCell>
        <TrayCell $w={30} $lh={17}><Fit w={23}>ENG</Fit><Fit w={11}>IN</Fit></TrayCell>
        <TrayCell $w={76} $lh={17}><Fit w={27}>15:41</Fit><Fit w={58}>15-06-2022</Fit></TrayCell>
        <TrayCell $w={45}><Notice s={25} /></TrayCell>
        <Divider />
      </Tray>
    </Bar>
  );
}

const MENU = [["", "M", "edia", 33], ["P", "l", "ayback", 47], ["", "A", "udio", 32], ["", "V", "ideo", 30], ["Subti", "t", "le", 40], ["Tool", "s", "", 27], ["V", "i", "ew", 25], ["", "H", "elp", 25]];

export default function App() {
  return (
    <Page>
      <Global />
      <TitleBar>
        <Cone s={16} /><span><Fit w={276}>95 HK_CoreJava_08_03_2022.mp4 - VLC media player</Fit></span>
        <WindowButtons>
          <div><svg width="10" height="10" viewBox="0 0 10 10" stroke="#000"><path d="M0 5.500h10" /></svg></div>
          <div><svg width="10" height="10" viewBox="0 0 10 10" fill="none" stroke="#000"><path d="M.5 2.500h7v7h-7zM2.500 2.500v-2h7v7h-2" /></svg></div>
          <div><svg width="10" height="10" viewBox="0 0 10 10" stroke="#000"><path d="m0 0 10 10M10 0 0 10" /></svg></div>
        </WindowButtons>
      </TitleBar>
      <MenuBar>{MENU.map(([a, b, c, w]) => <Fit key={a + b} w={w}>{a}<u>{b}</u>{c}</Fit>)}</MenuBar>
      <Stage>
        <Video>
          <VideoTop>
            <Desktop>
              <ExplorerWindow />
              <ViewerBar />
              <BackChat />
              <LectureSlide />
              <Welcome><Fit w={157}>Welcome to the Picasa Photo Viewer</Fit></Welcome>
              <ShareOverlay />
            </Desktop>
            <ChatPanel />
          </VideoTop>
          <InnerTaskbar />
        </Video>
      </Stage>
      <SeekRow><Fit w={28}>20:58</Fit><Track><i /></Track><Fit w={38}>1:48:43</Fit></SeekRow>
      <Controls>
        <Ctl $big $mr={14}><svg width="16" height="18" viewBox="0 0 16 18" fill="#707070"><path d="M0 0h5.500v18H0zM10 0h5.500v18H10z" /></svg></Ctl>
        <Ctl><C s={15}><path d="M0 3h2.500v10H0zM9 3v10L3 8zM16 3v10l-6-5z" /></C></Ctl>
        <Ctl><C s={15}><path d="M3 3h10v10H3z" /></C></Ctl>
        <Ctl $mr={14}><C s={15}><path d="M13.500 3H16v10h-2.500zM7 3v10l6-5zM0 3v10l6-5z" /></C></Ctl>
        <Ctl><svg width="17" height="15" viewBox="0 0 18 16" fill="none" stroke="#707070" strokeWidth="2.500"><path d="M1.500 6V2.300H6M12 2.300h4.500V6M16.500 10v3.700H12M6 13.700H1.500V10" /></svg></Ctl>
        <Ctl $mr={14}><C s={16}><path d="M2 1h2v14H2zM7 1h2v14H7zM12 1h2v14h-2zM0 3h6v2.500H0zM5 10h6v2.500H5zM10 5h6v2.500h-6z" /></C></Ctl>
        <Ctl><C><path d="M1 1h14v2.500H1zM1 5.300h14v2.500H1zM1 9.600h9v2.300H1zM1 13.500h9V16H1zM12 9.500l4 3.200-4 3.300z" /></C></Ctl>
        <Ctl><C><path d="M1 7V4.500Q1 2.500 3 2.500h8V0l4 3.500L11 7V5H3.500v2zM15 9v2.500q0 2-2 2H5V16l-4-3.500L5 9v2h7.500V9z" /></C></Ctl>
        <Ctl $on><C><path d="m2 1.500 5.200 5L5.500 8.300.5 3.200zM9 1.500h6.500V8l-2.300-2.300L3 15.500.8 13.700 11.200 3.800zM10.300 9l2.900 2.700L15.500 9.500V16H9l2.400-2.400-2.900-2.700z" /></C></Ctl>
        <Volume>
          <svg width="94" height="26" viewBox="0 0 94 26">
            <defs><linearGradient id="vol"><stop offset="0" stopColor="#73c873" /><stop offset=".7" stopColor="#19c41f" /><stop offset=".78" stopColor="#35bf1b" /><stop offset=".86" stopColor="#eeb51a" /><stop offset="1" stopColor="#f14b28" /></linearGradient></defs>
            <path d="M1 15h2l4-4v13l-4-4H1z" fill="#777" /><path d="M8.500 14.500q2 3 0 6M11 12.500q3 5 0 10" fill="none" stroke="#ec9432" strokeWidth="1.300" />
            <path d="M22 22.500 93 3v19.500z" fill="url(#vol)" stroke="#7d7d7d" strokeWidth="1.500" />
            <text x="25" y="11" fontSize="9" fontFamily="Open Sans, sans-serif" fill="#555" textLength="25" lengthAdjust="spacingAndGlyphs">125%</text>
          </svg>
        </Volume>
      </Controls>
      <OuterTaskbar />
    </Page>
  );
}
